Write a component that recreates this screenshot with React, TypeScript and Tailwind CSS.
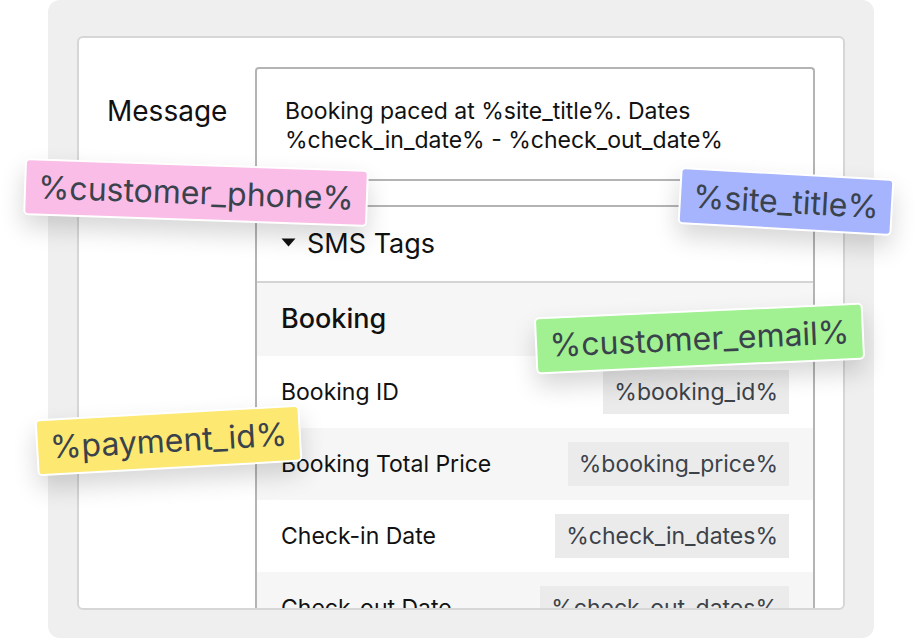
import React from "react";

const rows = [
  { label: "Booking ID", code: "%booking_id%", alt: false },
  { label: "Booking Total Price", code: "%booking_price%", alt: true },
  { label: "Check-in Date", code: "%check_in_dates%", alt: false },
  { label: "Check-out Date", code: "%check_out_dates%", alt: true },
];

export default function App() {
  return (
    <div
      className="relative w-[920px] h-[640px] overflow-hidden bg-white"
      style={{ fontFamily: "Inter, 'Noto Sans', sans-serif" }}
    >
      <div className="ml-[48px] w-[826px] h-[638px] rounded-[12px] bg-[#efefef] pt-[36px] px-[29px]">
        <div className="h-[574px] overflow-hidden rounded-[6px] border-2 border-[#d6d6d6] bg-white flex items-start pt-[29px] pr-[28px]">
          <div className="w-[176px] shrink-0 pl-[28px] pt-[27px]">
            <div className="text-[28px] leading-[34px] text-[#111]">Message</div>
          </div>
          <div className="flex-1 rounded-t-[4px] border-x-2 border-t-2 border-[#b4b4b4] flex flex-col">
            <div className="h-[112px] shrink-0 border-b-2 border-[#b4b4b4] pl-[28px] pt-[28px] text-[23px] leading-[29px] text-[#111]">
              <div>Booking paced at %site_title%. Dates</div>
              <div>%check_in_date% - %check_out_date%</div>
            </div>
            <div className="h-[24px] shrink-0" />
            <div className="shrink-0 border-t-2 border-[#b4b4b4]">
              <div className="h-[76px] flex items-center pl-[24px] gap-[11px] border-b-2 border-[#d4d4d4]">
                <svg width="15" height="9" viewBox="0 0 15 9" className="mt-[-3px]">
                  <path d="M0.5 0.5 L14.5 0.5 L7.5 8.5 Z" fill="#111" />
                </svg>
                <span className="text-[27px] text-[#111]">SMS Tags</span>
              </div>
              <div className="h-[73px] bg-[#f5f6f5] flex items-center pl-[24px]">
                <span className="text-[27px] font-medium text-[#111]">Booking</span>
              </div>
              {rows.map((r) => (
                <div
                  key={r.label}
                  className={
                    "h-[72px] flex items-center justify-between pl-[24px] pr-[24px] " +
                    (r.alt ? "bg-[#f5f6f5]" : "bg-white")
                  }
                >
                  <span className="text-[23px] text-[#111]">{r.label}</span>
                  <span className="h-[44px] flex items-center px-[11px] bg-[#ebebeb] text-[23px] text-[#3c4249]">
                    {r.code}
                  </span>
                </div>
              ))}
            </div>
          </div>
        </div>
      </div>

      <Tag
        text="%customer_phone%"
        cls="left-[24px] top-[164px] w-[344px] rotate-[2deg] bg-[#f9bde8]"
      />
      <Tag
        text="%site_title%"
        cls="left-[679px] top-[173px] w-[214px] rotate-[3.2deg] bg-[#a5b4fc]"
      />
      <Tag
        text="%customer_email%"
        cls="left-[535px] top-[310px] w-[329px] rotate-[-2.6deg] bg-[#a1f092]"
      />
      <Tag
        text="%payment_id%"
        cls="left-[36px] top-[412px] w-[265px] rotate-[-3.2deg] bg-[#fde872]"
      />
    </div>
  );
}

function Tag({ text, cls }: { text: string; cls: string }) {
  return (
    <div
      className={
        "absolute h-[57px] flex items-center justify-center whitespace-nowrap rounded-[5px] border-2 border-white text-[32px] text-[#3a424b] shadow-[0_12px_24px_rgba(0,0,0,0.16)] " +
        cls
      }
    >
      {text}
    </div>
  );
}
